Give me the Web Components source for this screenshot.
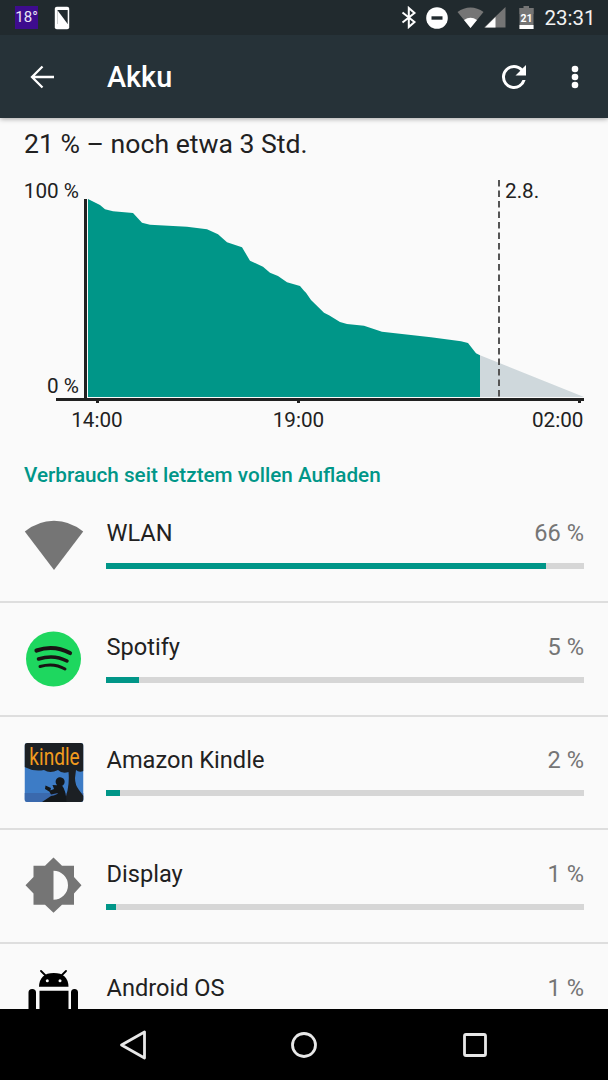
<!DOCTYPE html>
<html lang="de"><head><meta charset="utf-8"><title>Akku</title>
<style>html,body{margin:0;padding:0;background:#fafafa}body{font-family:Roboto,"Noto Sans",sans-serif}</style></head>
<body>
<battery-screen>
  <status-bar slot="status"></status-bar>
  <app-bar slot="bar" title="Akku"></app-bar>
  <battery-chart slot="main" summary="21 % – noch etwa 3 Std."></battery-chart>
  <section-title slot="main">Verbrauch seit letztem vollen Aufladen</section-title>
  <usage-row slot="main" label="WLAN" pct="66 %" fill="92">
    <svg slot="icon" width="60" height="60" viewBox="0 0 60 60"><path fill="#757575" d="M.8 16.500Q14 5.700 30 5.700T59.200 16.500L30 55Z"/></svg>
  </usage-row>
  <usage-row slot="main" label="Spotify" pct="5 %" fill="7">
    <svg slot="icon" width="60" height="60" viewBox="0 0 60 60"><circle cx="29.500" cy="30" r="27.500" fill="#1ed75f"/><g fill="none" stroke="#191414" stroke-linecap="round"><path stroke-width="4.200" d="M12.500 21.500Q30 15.500 46 24"/><path stroke-width="3.500" d="M14.500 30Q30 25 43 32"/><path stroke-width="3" d="M16 37.500Q30 33.500 41 40"/></g></svg>
  </usage-row>
  <usage-row slot="main" label="Amazon Kindle" pct="2 %" fill="3">
    <svg slot="icon" width="60" height="60" viewBox="0 0 60 60"><defs><clipPath id="k"><rect x=".500" width="59" height="59" rx="3"/></clipPath></defs><g clip-path="url(#k)"><rect x=".500" width="59" height="59" fill="#3d7cc6"/><rect x=".500" y="50" width="59" height="9" fill="#3a69ad"/><path fill="#1c2024" d="M.5 0H59.500V28Q55 30 52 27L51 35Q51 42 55 47L59.500 53V59H40Q46 44 44.500 29Q38 31 34 27 26 31 20 27 10 29 .5 24Z"/><path fill="#14181b" d="M33 35.500A4.500 4.500 0 1 1 32.900 35.600ZM28.500 42 38 42.500Q42 47 42.500 59H18L27 53Q33 52 34 50L27 51.500 25 48 30 46ZM21.500 42.500 27 45 26 49 21 46Z"/></g><text transform="translate(30.500 21.500) scale(.83 1)" text-anchor="middle" font-family="Roboto,sans-serif" font-size="23" fill="#f29c1f">kindle</text></svg>
  </usage-row>
  <usage-row slot="main" label="Display" pct="1 %" fill="2">
    <svg slot="icon" width="60" height="60" viewBox="0 0 60 60"><path fill="#757575" fill-rule="evenodd" d="M29.500 1.500 38 9.800 50 9.800 50 21 57.500 29.300 50 37.500 50 48.800 38 48.800 29.500 56.800 21 48.800 9.500 48.800 9.500 37.500 1.500 29.300 9.500 21 9.500 9.800 21 9.800ZM29.500 14.800V43.800A14.500 14.500 0 0 0 29.500 14.800Z"/></svg>
  </usage-row>
  <usage-row slot="main" label="Android OS" pct="1 %" fill="2">
    <svg slot="icon" width="60" height="60" viewBox="0 0 60 60"><path fill="#000" d="M15 16.800Q15.500 3 29.800 3T44.500 16.800ZM8.200 19Q12 19 12 22.500V50H4.500V22.500Q4.500 19 8.200 19ZM15.500 20.700H44.500V56H15.500ZM50.500 19Q54 19 54 22.500V50H47V22.500Q47 19 50.500 19Z"/><path stroke="#000" stroke-width="1.800" stroke-linecap="round" fill="none" d="M17 1 21.500 5.500M42 1 37.500 5.500"/><circle cx="23.300" cy="10.700" r="1.500" fill="#fafafa"/><circle cx="36" cy="10.700" r="1.500" fill="#fafafa"/></svg>
  </usage-row>
  <nav-bar slot="nav"></nav-bar>
</battery-screen>
<script>
function def(name, css, html){
  customElements.define(name, class extends HTMLElement{
    connectedCallback(){
      if(this.shadowRoot) return;
      const r=this.attachShadow({mode:'open'});
      const a=n=>this.getAttribute(n)||'';
      r.innerHTML='<style>'+css+'</style>'+(typeof html==='function'?html(a):html);
    }
  });
}
def('battery-screen',`:host{display:flex;flex-direction:column;width:608px;height:1080px;overflow:hidden;background:#fafafa;color:#212121}
 main{flex:1;min-height:0;overflow:hidden;display:flex;flex-direction:column}`,
 `<slot name="status"></slot><slot name="bar"></slot><main><slot name="main"></slot></main><slot name="nav"></slot>`);

def('status-bar',`:host{display:flex;align-items:center;height:35px;flex:none;background:#212a2e;color:#fff;padding:0 12.500px 0 15px;position:relative;z-index:2}
 .temp{width:23px;height:23px;background:#3e0c8e;font:15px/23px Roboto,sans-serif;text-align:center;color:#e8e4f4;margin-right:16px}
 svg{display:block;flex:none}
 .sp{flex:1}
 .time{font:20.500px Roboto,sans-serif;color:#f2f2f2;margin-left:10px}`,
 `<div class="temp">18°</div>
 <svg width="16" height="24" viewBox="0 0 16 24"><rect x=".8" y=".8" width="14.400" height="22.400" rx="2" fill="#fff"/><path fill="#212a2e" d="M3.300 4H13.700V18H3.300Z"/><path fill="#fff" d="M3.300 18V4L13.700 18Z"/></svg>
 <div class="sp"></div>
 <svg width="16" height="23" viewBox="0 0 16 23" style="margin-right:9px"><path fill="none" stroke="#fff" stroke-width="2" d="M1.500 6.500 13.500 16 7.800 21V2L13.500 7 1.500 16.500"/></svg>
 <svg width="22" height="22" viewBox="0 0 22 22" style="margin-right:9px"><circle cx="11" cy="11" r="10.800" fill="#fff"/><rect x="5.500" y="9.300" width="11" height="3.400" fill="#212a2e"/></svg>
 <svg width="27" height="22" viewBox="0 0 27 22"><path fill="#757575" d="M.5 5Q6.500.5 13.500.5T26.500 5L13.500 21Z"/><path fill="#fff" d="M7 13Q13.500 8.500 20 13L13.500 21Z"/></svg>
 <svg width="22" height="22" viewBox="0 0 22 22"><path fill="#757575" d="M21.500 0V20.500H0Z"/><path fill="#fff" d="M11.500 10V20.500H1Z"/></svg>
 <svg width="15" height="23" viewBox="0 0 15 23" style="margin-left:13px"><path fill="#757575" d="M4.500 0H10V2H14.500V8H.5V2H4.500Z"/><rect x=".5" y="2" width="14" height="21" fill="#757575"/><rect x=".5" y="19" width="14" height="4" fill="#fff"/><text x="7.500" y="15.500" text-anchor="middle" font-family="Roboto,sans-serif" font-weight="700" font-size="10.500" fill="#fff">21</text></svg>
 <div class="time">23:31</div>`);

def('app-bar',`:host{display:flex;align-items:center;flex:none;height:83px;background:#263238;color:#fff;padding:0 29px 0 30px;box-shadow:0 1px 5px rgba(0,0,0,.35);position:relative;z-index:1}
 h1{flex:1;margin:0 0 0 53px;font:500 28.800px Roboto,sans-serif}
 svg{display:block;flex:none}`,
 a=>`<svg width="24" height="24" viewBox="0 0 24 24"><path fill="none" stroke="#fff" stroke-width="2.300" d="M24 12H2M12.500 1.500 2 12 12.500 22.500"/></svg>
 <h1>${a('title')}</h1>
 <svg width="36" height="36" viewBox="0 0 24 24" style="margin-right:39.500px"><path fill="#fff" d="M17.650 6.350A7.960 7.960 0 0 0 12 4a8 8 0 1 0 7.730 10h-2.080A6 6 0 1 1 12 6c1.660 0 3.140.69 4.220 1.780L13 11h7V4z"/></svg>
 <svg width="8" height="24" viewBox="0 0 8 24"><circle cx="4" cy="4" r="3.300" fill="#fff"/><circle cx="4" cy="12" r="3.300" fill="#fff"/><circle cx="4" cy="20" r="3.300" fill="#fff"/></svg>`);

def('battery-chart',`:host{display:block;flex:none;padding:11px 0 0}
 .sum{font:26.600px/30px Roboto,sans-serif;color:#212121;padding-left:24px}
 svg{display:block;margin-top:1px}
 text{font-family:Roboto,sans-serif;font-size:20.700px;fill:#212121}`,
 a=>`<div class="sum">${a('summary')}</div>
 <svg width="608" height="275" viewBox="0 160 608 275">
  <path fill="#cfd8dc" d="M480 355.300 584 397H480Z"/>
  <path fill="#009688" d="M88 199 100 205 105 209.300 113 211.300 133 213 142 222.700 150 224.700 187 226.700 207 229.300 218 234.300 227 242.300 242 247.300 250 260.700 263 266.700 270 272.700 278 276 287 282.300 300 286 304 290.700 306 292.700 311 300 324 312.700 329 315.300 340 322 347 324 364 325.700 382 331.700 431 337.300 461 341.300 468 343 476 353.300 480 355.300V397H88Z"/>
  <path stroke="#555" stroke-width="2" stroke-dasharray="6.500 4" fill="none" d="M499 180V397"/>
  <rect x="84" y="199" width="3" height="199" fill="#212121"/>
  <rect x="56" y="398" width="528" height="3" fill="#212121"/>
  <rect x="96" y="401" width="3" height="2" fill="#212121"/><rect x="297" y="401" width="3" height="2" fill="#212121"/><rect x="578" y="401" width="3" height="2" fill="#212121"/>
  <text x="79" y="198" text-anchor="end">100 %</text>
  <text x="79" y="393" text-anchor="end">0 %</text>
  <text x="505" y="198">2.8.</text>
  <text x="97" y="427" text-anchor="middle">14:00</text>
  <text x="298.500" y="427" text-anchor="middle">19:00</text>
  <text x="583.500" y="427" text-anchor="end">02:00</text>
 </svg>`);

def('section-title',`:host{display:block;flex:none;font:500 20.700px/24px Roboto,sans-serif;color:#009688;padding:0 24px;margin-top:28px;height:26.330px}`,`<slot></slot>`);

def('usage-row',`:host{display:grid;flex:none;box-sizing:border-box;height:113.670px;grid-template-columns:60px 1fr;column-gap:22.500px;padding:0 24px 0 23.500px;border-bottom:2px solid #dedede;align-items:start}
 .ic{padding-top:26px}
 ::slotted(svg){display:block}
 .line{display:flex;justify-content:space-between;font:23.600px/30px Roboto,sans-serif;padding:28.850px 0 0 .5px}
 .lab{color:#212121}.pct{color:#757575}
 .track{height:6px;background:#d6d6d6;margin-top:14.850px}
 .fill{height:100%;background:#009688}`,
 a=>`<div class="ic"><slot name="icon"></slot></div><div><div class="line"><span class="lab">${a('label')}</span><span class="pct">${a('pct')}</span></div><div class="track"><div class="fill" style="width:${a('fill')}%"></div></div></div>`);

def('nav-bar',`:host{display:flex;flex:none;align-items:center;height:71px;background:#000;position:relative;z-index:2;padding-left:118px}
 svg{display:block;flex:none}`,
 `<svg width="30" height="30" viewBox="0 0 30 30" style="margin-right:141.800px"><path fill="none" stroke="#e8e8e8" stroke-width="2.800" stroke-linejoin="round" d="M26.500 2V28L3.500 15Z"/></svg>
 <svg width="28" height="28" viewBox="0 0 28 28" style="margin-right:144.200px"><circle cx="14" cy="14" r="11.500" fill="none" stroke="#e8e8e8" stroke-width="2.800"/></svg>
 <svg width="26" height="26" viewBox="0 0 26 26"><rect x="2.500" y="2.500" width="21" height="21" rx="1.500" fill="none" stroke="#e8e8e8" stroke-width="2.800"/></svg>`);
</script>
</body></html>
